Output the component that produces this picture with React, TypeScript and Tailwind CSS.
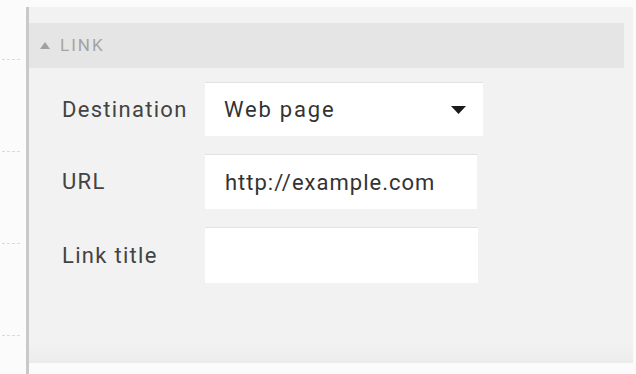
import React from 'react';

const font = { fontFamily: 'Roboto, "Liberation Sans", sans-serif' };

const Field: React.FC<{ label: string; children?: React.ReactNode; width: string; height: string }> = ({
  label,
  children,
  width,
  height,
}) => (
  <div className="flex items-center">
    <div className="w-[143px] text-[22px] tracking-[1.3px] text-[#434343]">{label}</div>
    <div
      className={`flex items-center bg-white border-t border-[#e2e2e2] ${width} ${height}`}
    >
      {children}
    </div>
  </div>
);

export default function App() {
  return (
    <div className="flex h-[374px] w-[636px] bg-[#fbfbfb] pt-[7px]" style={font}>
      {/* left gutter with faint guide dashes */}
      <div className="flex w-[26px] flex-col pt-[52px] gap-[91px]">
        {[0, 1, 2, 3].map((i) => (
          <div key={i} className="ml-[2px] w-[18px] border-t border-dashed border-[#dadada]" />
        ))}
      </div>
      <div className="w-[3px] h-[367px] bg-[#c9c9c9]" />

      <div className="flex h-[356px] w-[604px] flex-col bg-gradient-to-b from-[#f2f2f2] from-94% to-[#ececec] pt-[16px]">
        <div className="flex h-[45px] w-[595px] items-center gap-[10px] bg-[#e5e5e5] pl-[11px] text-[#a3a3a3]">
          <svg width="10" height="7" viewBox="0 0 10 7">
            <path d="M0 7 L5 0 L10 7 Z" fill="#a0a0a0" />
          </svg>
          <span className="text-[17px] tracking-[2px]">LINK</span>
        </div>

        <div className="flex flex-col gap-[18px] pl-[33px] pt-[14px]">
          <Field label="Destination" width="w-[278px]" height="h-[54px]">
            <span className="pl-[19px] text-[22px] tracking-[1.8px] text-[#333]">Web page</span>
            <svg className="ml-auto mr-[17px]" width="15" height="8" viewBox="0 0 15 8">
              <path d="M0 0 L15 0 L7.5 8 Z" fill="#1a1a1a" />
            </svg>
          </Field>
          <Field label="URL" width="w-[272px]" height="h-[55px]">
            <span className="pl-[20px] text-[22px] tracking-[1px] text-[#333]">http://example.com</span>
          </Field>
          <Field label="Link title" width="w-[273px]" height="h-[56px]" />
        </div>
      </div>
    </div>
  );
}
